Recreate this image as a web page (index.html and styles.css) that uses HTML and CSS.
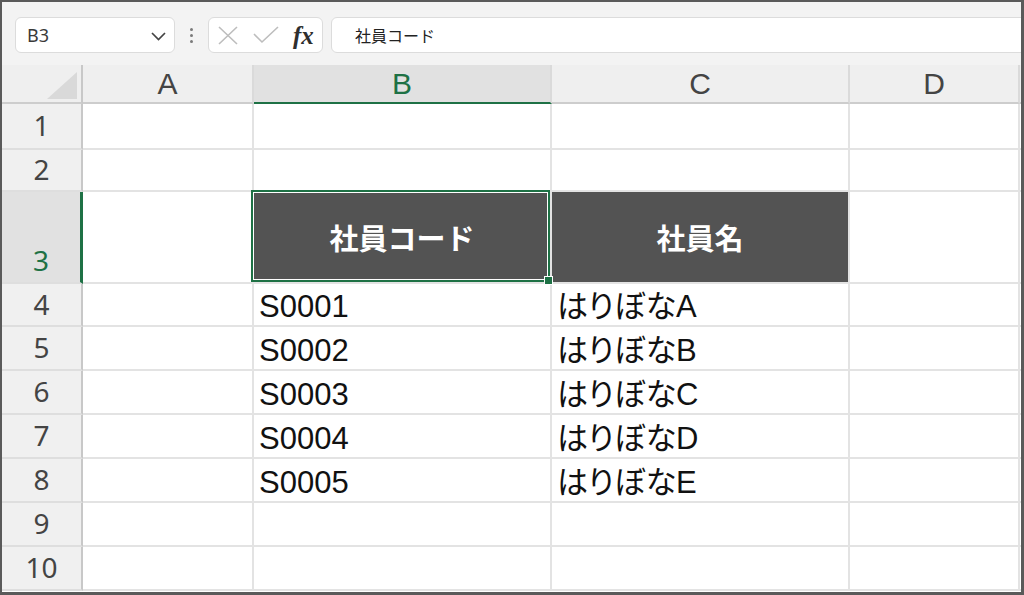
FILE: index.html
```html
<!DOCTYPE html>
<html lang="ja">
<head>
<meta charset="utf-8">
<title>社員コード</title>
<link rel="stylesheet" href="styles.css">
</head>
<body>
<div class="frame">
  <div class="fbar">
    <div class="namebox">
      <span class="ref">B3</span>
      <svg class="chev" width="15" height="9" viewBox="0 0 15 9"><polyline points="1,1 7.5,7.5 14,1" fill="none" stroke="#444" stroke-width="1.7"/></svg>
    </div>
    <div class="grip"><i></i><i></i><i></i></div>
    <div class="fxbox">
      <svg class="xicon" width="20" height="19" viewBox="0 0 20 19"><path d="M1 1 L19 18 M19 1 L1 18" stroke="#bdbdbd" stroke-width="1.6" fill="none"/></svg>
      <svg class="okicon" width="26" height="18" viewBox="0 0 26 18"><polyline points="1,8 9,16 25,1" stroke="#bdbdbd" stroke-width="1.6" fill="none"/></svg>
      <span class="fx">fx</span>
    </div>
    <div class="input">社員コード</div>
  </div>
  <div class="sheet">
    <div class="corner"><svg width="30" height="27" viewBox="0 0 30 27"><polygon points="30,0 30,27 0,27" fill="#d9d9d9"/></svg></div>
    <div class="ch">A</div><div class="ch sel">B</div><div class="ch">C</div><div class="ch">D</div><div class="ch"></div>

    <div class="rh">1</div><div class="c"></div><div class="c"></div><div class="c"></div><div class="c"></div><div class="c"></div>
    <div class="rh">2</div><div class="c"></div><div class="c"></div><div class="c"></div><div class="c"></div><div class="c"></div>
    <div class="rh sel">3</div><div class="c"></div><div class="c head active">社員コード</div><div class="c head">社員名</div><div class="c"></div><div class="c"></div>
    <div class="rh">4</div><div class="c"></div><div class="c">S0001</div><div class="c">はりぼなA</div><div class="c"></div><div class="c"></div>
    <div class="rh">5</div><div class="c"></div><div class="c">S0002</div><div class="c">はりぼなB</div><div class="c"></div><div class="c"></div>
    <div class="rh">6</div><div class="c"></div><div class="c">S0003</div><div class="c">はりぼなC</div><div class="c"></div><div class="c"></div>
    <div class="rh">7</div><div class="c"></div><div class="c">S0004</div><div class="c">はりぼなD</div><div class="c"></div><div class="c"></div>
    <div class="rh">8</div><div class="c"></div><div class="c">S0005</div><div class="c">はりぼなE</div><div class="c"></div><div class="c"></div>
    <div class="rh">9</div><div class="c"></div><div class="c"></div><div class="c"></div><div class="c"></div><div class="c"></div>
    <div class="rh">10</div><div class="c"></div><div class="c"></div><div class="c"></div><div class="c"></div><div class="c"></div>
  </div>
</div>
</body>
</html>
```
FILE: styles.css
```css
body {
  margin: 0;
  background: #fff;
}

.frame {
  width: 1024px;
  height: 595px;
  box-sizing: border-box;
  border-style: solid;
  border-color: #5a5a5a;
  border-width: 2px 3px 3px 2px;
  display: flex;
  flex-direction: column;
  overflow: hidden;
  background: #fff;
}

/* formula bar */
.fbar {
  flex: none;
  height: 63px;
  box-sizing: border-box;
  background: #f3f3f3;
  display: flex;
  align-items: flex-start;
  padding: 15px 0 0 13px;
}

.namebox,
.fxbox,
.input {
  height: 36px;
  box-sizing: border-box;
  border: 1px solid #dcdcdc;
  border-radius: 6px;
  background: #fff;
  display: flex;
  align-items: center;
}

.namebox {
  width: 160px;
  justify-content: space-between;
  padding: 0 8px 0 11px;
  font: 18px "Noto Sans", sans-serif;
  color: #3a3a3a;
}

.chev {
  margin-top: 2px;
}

.grip {
  width: 33px;
  height: 36px;
  display: flex;
  flex-direction: column;
  align-items: center;
  justify-content: center;
  gap: 3px;
}

.grip i {
  width: 3px;
  height: 3px;
  border-radius: 50%;
  background: #7a7a7a;
}

.fxbox {
  width: 115px;
  padding-left: 9px;
}

.okicon {
  margin-left: 15px;
}

.fx {
  margin-left: 14px;
  font: italic 700 25px "Liberation Serif", serif;
  color: #2e2e2e;
  line-height: 1;
}

.input {
  flex: 1;
  margin-left: 8px;
  margin-right: -12px;
  padding-left: 23px;
  font: 16px "Noto Sans CJK JP", sans-serif;
  color: #222;
}

/* sheet grid */
.sheet {
  flex: 1;
  min-height: 0;
  display: grid;
  grid-template-columns: 81px 171px 298px 298px 170px 1fr;
  grid-template-rows: 39px 46px 42px 92px 43px;
  grid-auto-rows: 44px;
  overflow: hidden;
}

.corner {
  background: #efefef;
  border-right: 2px solid #c8c8c8;
  border-bottom: 2px solid #cdcdcd;
  display: flex;
  justify-content: flex-end;
  align-items: flex-end;
  padding: 0 4px 3px 0;
}

.ch {
  background: #efefef;
  border-right: 2px solid #dadada;
  border-bottom: 2px solid #cdcdcd;
  display: flex;
  align-items: center;
  justify-content: center;
  font: 30px/1 "Liberation Sans", sans-serif;
  color: #444;
}

.ch.sel {
  background: #e1e1e1;
  color: #1e7145;
  border-bottom-color: #1e7145;
}

.rh {
  background: #f0f0f0;
  border-right: 2px solid #c8c8c8;
  border-bottom: 2px solid #dedede;
  display: flex;
  align-items: center;
  justify-content: center;
  font: 28px/1.2 "Noto Sans", sans-serif;
  color: #444;
}

.rh.sel {
  background: #e1e1e1;
  color: #1e7145;
  border-right: 3px solid #1e7145;
  align-items: flex-end;
  padding-bottom: 4px;
}

.c {
  min-width: 0;
  border-right: 2px solid #e3e3e3;
  border-bottom: 2px solid #e3e3e3;
  display: flex;
  align-items: flex-end;
  padding-left: 5px;
  font: 31px/1.2 "Liberation Sans", "Noto Sans CJK JP", sans-serif;
  font-feature-settings: "palt";
  color: #111;
  white-space: nowrap;
}

.c.head {
  background: #535353;
  color: #fff;
  padding-left: 0;
  justify-content: center;
  align-items: center;
  font: 700 29px/1.2 "Noto Sans CJK JP", sans-serif;
  font-feature-settings: normal;
}

.active {
  position: relative;
}

.active::before {
  content: "";
  position: absolute;
  left: -3px;
  top: -2px;
  right: 0;
  bottom: 0;
  border: 2px solid #1e7145;
  box-shadow: inset 0 0 0 1px #fff;
  z-index: 1;
}

.active::after {
  content: "";
  position: absolute;
  right: -3px;
  bottom: -3px;
  width: 7px;
  height: 7px;
  background: #1e7145;
  border: 1px solid #fff;
  z-index: 2;
}
```
